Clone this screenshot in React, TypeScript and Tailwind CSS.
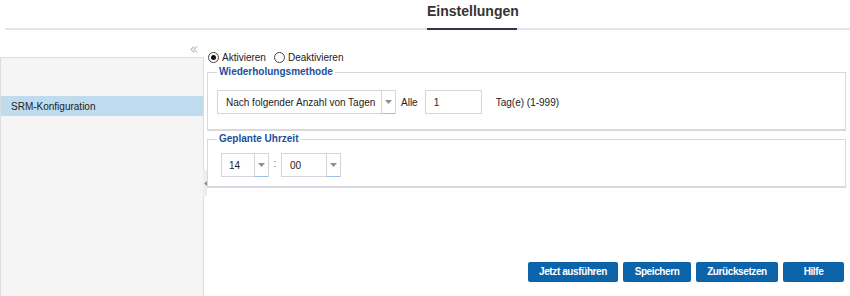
import React from "react";

function Arrow() {
  return (
    <svg width="7" height="4" viewBox="0 0 7 4">
      <path d="M0 0 L7 0 L3.5 4 Z" fill="#8a8f99" />
    </svg>
  );
}

function Select({ text, width, arrowW = 14, pl = 9 }: { text: string; width: number; arrowW?: number; pl?: number }) {
  return (
    <div className="flex h-[24px] border border-[#d3d5db] bg-white" style={{ width }}>
      <div className="flex-1 flex items-center text-[10px] text-[#222]" style={{ paddingLeft: pl - 1 }}>
        {text}
      </div>
      <div className="flex items-center justify-center border-l border-[#d3d5db] border-b border-b-[#9cc0e6] -mb-px" style={{ width: arrowW }}>
        <Arrow />
      </div>
    </div>
  );
}

function Radio({ checked }: { checked?: boolean }) {
  return (
    <span className="w-[11px] h-[11px] rounded-full border border-[#444] bg-white flex items-center justify-center">
      {checked && <span className="w-[5px] h-[5px] rounded-full bg-[#111]" />}
    </span>
  );
}

export default function App() {
  return (
    <div className="w-[850px] h-[296px] bg-white overflow-hidden flex flex-col font-['Liberation_Sans',Arial,sans-serif]">
      <div className="h-[30px] ml-[5px] border-b-2 border-[#e4e4ea] flex pl-[422px] shrink-0">
        <div className="w-[90px] h-[30px] -mb-[2px] border-b-2 border-[#37334e] text-[14px] font-bold text-[#333] leading-[16px] pt-[3px]">
          Einstellungen
        </div>
      </div>
      <div className="flex flex-1 min-h-0">
        <div className="w-[204px] flex flex-col shrink-0">
          <div className="h-[27px] flex justify-end items-start pr-[6px] pt-[16px]">
            <svg width="8" height="7" viewBox="0 0 8 7">
              <path d="M4 0.5 L1 3.5 L4 6.5 M7 0.5 L4 3.5 L7 6.5" stroke="#8b8f98" strokeWidth="1" fill="none" />
            </svg>
          </div>
          <div className="flex-1 bg-[#f5f5f5] border-t border-l border-r border-[#dcdde3] pt-[38px]">
            <div className="h-[20px] bg-[#bfdcee] flex items-center pl-[10px] text-[10px] text-[#222]">
              SRM-Konfiguration
            </div>
          </div>
        </div>
        <div className="flex-1 relative pl-[3px] pr-[4px] flex flex-col">
          <div className="absolute left-[-1px] top-[140px] w-[4px] h-[26px] bg-[#eceef1] flex items-center justify-center">
            <svg width="3" height="5" viewBox="0 0 3 5">
              <path d="M3 0 L0 2.5 L3 5 Z" fill="#8a8f99" />
            </svg>
          </div>
          <div className="h-[14px] mt-[20px] flex items-center text-[10px] text-[#222]">
            <span className="ml-[1px]"><Radio checked /></span>
            <span className="ml-[3px]">Aktivieren</span>
            <span className="ml-[8px]"><Radio /></span>
            <span className="ml-[3px]">Deaktivieren</span>
          </div>
          <fieldset className="mt-[2px] border border-b-2 border-[#d8d9e0] pl-[9px] pt-[12px] pb-[15px]">
            <legend className="px-[2px] text-[10px] font-bold text-[#1d4f9c] leading-[12px]">Wiederholungsmethode</legend>
            <div className="flex items-center">
              <Select text="Nach folgender Anzahl von Tagen" width={179} />
              <span className="ml-[5px] text-[10px] text-[#222]">Alle</span>
              <div className="ml-[7px] w-[57px] h-[24px] border border-[#d3d5db] flex items-center pl-[8px] text-[10px] text-[#222]">1</div>
              <span className="ml-[14px] text-[10px] text-[#222]">Tag(e) (1-999)</span>
            </div>
          </fieldset>
          <fieldset className="mt-[2px] border border-b-2 border-[#d8d9e0] pl-[9px] pt-[8px] pb-[9px]">
            <legend className="px-[2px] text-[10px] font-bold text-[#1d4f9c] leading-[12px]">Geplante Uhrzeit</legend>
            <div className="flex items-center ml-[4px]">
              <Select text="14" width={48} pl={8} />
              <span className="w-[12px] text-center text-[10px] text-[#666] -mt-[3px]">:</span>
              <Select text="00" width={60} pl={9} />
            </div>
          </fieldset>
          <div className="mt-auto mb-[14px] mr-[2px] flex justify-end gap-[5px]">
            <button className="w-[90px] h-[20px] rounded-[2px] bg-[#0b64a9] text-white text-[10px] tracking-[-0.4px] font-bold pb-[2px]">Jetzt ausführen</button>
            <button className="w-[68px] h-[20px] rounded-[2px] bg-[#0b64a9] text-white text-[10px] tracking-[-0.4px] font-bold pb-[2px]">Speichern</button>
            <button className="w-[82px] h-[20px] rounded-[2px] bg-[#0b64a9] text-white text-[10px] tracking-[-0.4px] font-bold pb-[2px]">Zurücksetzen</button>
            <button className="w-[61px] h-[20px] rounded-[2px] bg-[#0b64a9] text-white text-[10px] tracking-[-0.4px] font-bold pb-[2px]">Hilfe</button>
          </div>
        </div>
      </div>
    </div>
  );
}
